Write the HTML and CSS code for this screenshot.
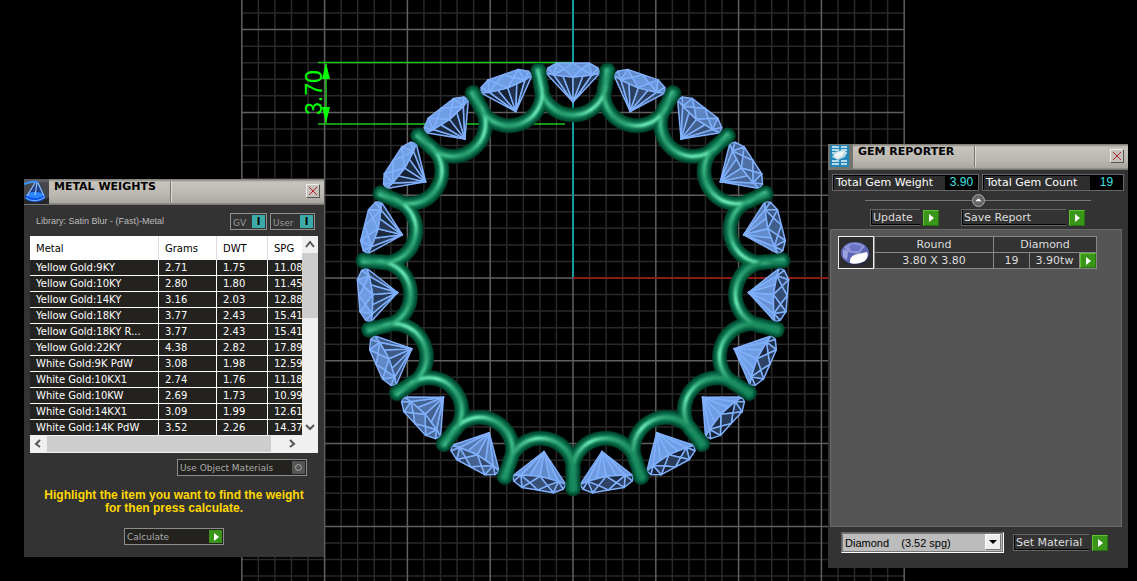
FILE: index.html
```html
<!DOCTYPE html>
<html lang="en">
<head>
  <meta charset="UTF-8">
  <title>Metal Weights / Gem Reporter</title>
  <link rel="stylesheet" href="styles.css">
</head>
<body>
  <main class="viewport">
    <svg class="scene" viewBox="0 0 1137 581" preserveAspectRatio="xMidYMid slice" role="img" aria-label="Eternity ring, front view">
      <defs>
        <path id="wire" d="M-34-208L-32-189C-29-174-16-163 0-163S29-174 32-189L34-208"/>
        <filter id="soft" x="-5%" y="-5%" width="110%" height="110%"><feGaussianBlur stdDeviation="1.1"/></filter>
        <linearGradient id="shine" gradientUnits="userSpaceOnUse" x1="-36" y1="0" x2="36" y2="0">
          <stop offset="0" stop-color="#1b8c60"/>
          <stop offset=".15" stop-color="#49c896"/>
          <stop offset=".35" stop-color="#2c9e71"/>
          <stop offset=".5" stop-color="#35b183"/>
          <stop offset=".75" stop-color="#7dfcca"/>
          <stop offset="1" stop-color="#5be0ad"/>
        </linearGradient>
        <linearGradient id="shine2" gradientUnits="userSpaceOnUse" x1="-36" y1="0" x2="36" y2="0">
          <stop offset="0" stop-color="#168559"/>
          <stop offset=".35" stop-color="#38b082"/>
          <stop offset=".65" stop-color="#7dfcca"/>
          <stop offset="1" stop-color="#168559"/>
        </linearGradient>
      </defs>
      <g id="grid"></g>
      <g class="dimension">
        <path d="M318 62.500H573M318 124H565"/>
        <path d="M326 64V123"/>
        <path class="arrow" d="M326 63L322 79H330ZM326 123L322 107H330Z"/>
        <text x="322" y="115" transform="rotate(-90 322 115)">3.70</text>
      </g>
      <path class="axis-y" d="M573 0V278"/>
      <path class="axis-x" d="M573 278H828"/>
      <g id="ring" transform="translate(573 278)"></g>
    </svg>

    <section class="window metal">
      <header class="titlebar">
        <svg class="logo" viewBox="0 0 25 25" aria-hidden="true">
          <rect width="25" height="25" fill="#45474d"/>
          <path d="M0 0H25V3L0 5Z" fill="#5b5d62"/>
          <path d="M0 20Q12 26 25 18V25H0Z" fill="#26272b"/>
          <path d="M11 4L2 18Q10 24 22 18L15 4Z" fill="#1f3f86"/>
          <ellipse cx="11" cy="18" rx="10" ry="5" fill="#0a55e8"/>
          <ellipse cx="11" cy="16" rx="8" ry="3" fill="#2f86ff"/>
          <path d="M0 5Q8 2 14 3" fill="none" stroke="#3c93ff" stroke-width="2"/>
          <path d="M11 4L3 17M13 4L11 16M14 4L20 17" fill="none" stroke="#9dc4f5" stroke-width="1.200"/>
          <path d="M2 19Q11 25 21 18" fill="none" stroke="#7db7ff"/>
        </svg>
        <h2>METAL WEIGHTS</h2>
        <i class="divider"></i>
        <button class="close" aria-label="Close"><svg viewBox="0 0 12 12"><path d="M2 2L10 10M10 2L2 10"/></svg></button>
      </header>
      <div class="library">
        <span class="library-name">Library: Satin Blur - (Fast)-Metal</span>
        <button class="toggle gv">GV <b>I</b></button>
        <button class="toggle user">User <b>I</b></button>
      </div>
      <div class="grid-box">
        <div class="rows">
          <table class="weights">
            <thead><tr><th>Metal</th><th>Grams</th><th>DWT</th><th>SPG</th></tr></thead>
            <tbody>
              <tr><td>Yellow Gold:9KY</td><td>2.71</td><td>1.75</td><td>11.08</td></tr>
              <tr><td>Yellow Gold:10KY</td><td>2.80</td><td>1.80</td><td>11.45</td></tr>
              <tr><td>Yellow Gold:14KY</td><td>3.16</td><td>2.03</td><td>12.88</td></tr>
              <tr><td>Yellow Gold:18KY</td><td>3.77</td><td>2.43</td><td>15.41</td></tr>
              <tr><td>Yellow Gold:18KY R...</td><td>3.77</td><td>2.43</td><td>15.41</td></tr>
              <tr><td>Yellow Gold:22KY</td><td>4.38</td><td>2.82</td><td>17.89</td></tr>
              <tr><td>White Gold:9K PdW</td><td>3.08</td><td>1.98</td><td>12.59</td></tr>
              <tr><td>White Gold:10KX1</td><td>2.74</td><td>1.76</td><td>11.18</td></tr>
              <tr><td>White Gold:10KW</td><td>2.69</td><td>1.73</td><td>10.99</td></tr>
              <tr><td>White Gold:14KX1</td><td>3.09</td><td>1.99</td><td>12.61</td></tr>
              <tr><td>White Gold:14K PdW</td><td>3.52</td><td>2.26</td><td>14.37</td></tr>
            </tbody>
          </table>
        </div>
        <div class="vbar">
          <svg viewBox="0 0 16 16"><path d="M4 11L8 6L12 11"/></svg>
          <i class="thumb"></i>
          <svg class="down" viewBox="0 0 16 16"><path d="M4 6L8 10L12 6"/></svg>
        </div>
        <div class="hbar">
          <svg viewBox="0 0 16 16"><path d="M10 5L6 9L10 12"/></svg>
          <i class="thumb"></i>
          <svg class="next" viewBox="0 0 16 16"><path d="M6 5L10 9L6 12"/></svg>
        </div>
      </div>
      <button class="flat materials">Use Object Materials <span class="ring-mark"><i></i></span></button>
      <p class="hint">Highlight the item you want to find the weight for then press calculate.</p>
      <button class="flat calculate">Calculate <span class="go"></span></button>
    </section>

    <section class="window gems">
      <header class="titlebar">
        <svg class="logo" viewBox="0 0 25 25" aria-hidden="true">
          <rect width="25" height="25" fill="#75756f"/>
          <rect x="2" y="1" width="19" height="22" fill="#2187b8"/>
          <path d="M4 3H11M13 3H19M4 6H11M13 6H19M4 9H19M4 17H11M13 17H19M4 20H11M13 20H19" stroke="#e7f5fa" stroke-width="1.500"/>
          <path d="M4 13L7 8 14 6 19 8 17 13 10 16Z" fill="#b9d8df"/>
          <path d="M6 11L10 8 17 7 14 12 9 15Z" fill="#eef4f3"/>
        </svg>
        <h2>GEM REPORTER</h2>
        <i class="divider"></i>
        <button class="close" aria-label="Close"><svg viewBox="0 0 12 12"><path d="M2 2L10 10M10 2L2 10"/></svg></button>
      </header>
      <div class="totals">
        <div class="total weight"><span>Total Gem Weight</span><output>3.90</output></div>
        <div class="total count"><span>Total Gem Count</span><output>19</output></div>
      </div>
      <div class="splitter"><button class="fold" aria-label="Collapse"><svg viewBox="0 0 14 14"><path d="M3 8L7 4L11 8Z"/></svg></button></div>
      <div class="actions">
        <button class="action update"><span>Update</span><i class="go"></i></button>
        <button class="action save"><span>Save Report</span><i class="go"></i></button>
      </div>
      <div class="report">
        <div class="gem">
          <svg class="gem-icon" viewBox="0 0 34 31" aria-hidden="true">
            <ellipse cx="17" cy="17" rx="14" ry="12" fill="#242940"/>
            <ellipse cx="16" cy="16" rx="14" ry="11" fill="#5d66b3"/>
            <path d="M5 10Q15 2 26 9L20 17 8 15Z" fill="#8f96d8"/>
            <path d="M4 12L9 15 8 23 4 20Z" fill="#9da4e2"/>
            <path d="M10 9L14 7 23 9 20 14 12 14Z" fill="#6973c4"/>
            <path d="M11 23Q12 18 19 17L28 15Q30 20 26 24 18 28 11 26Z" fill="#fff"/>
          </svg>
          <table class="gem-table">
            <colgroup><col class="size"><col class="qty"><col class="tw"><col class="run"></colgroup>
            <tr><td>Round</td><td colspan="3">Diamond</td></tr>
            <tr><td>3.80 X 3.80</td><td>19</td><td>3.90tw</td><td><button class="go" aria-label="Select gem"></button></td></tr>
          </table>
        </div>
      </div>
      <div class="footer">
        <div class="combo">
          <select aria-label="Gem material"><option>Diamond &nbsp;&nbsp; (3.52 spg)</option></select>
          <i class="drop"></i>
        </div>
        <button class="action set"><span>Set Material</span><i class="go"></i></button>
      </div>
    </section>
  </main>
  <script src="script.js"></script>
</body>
</html>
```
FILE: styles.css
```css
* { box-sizing: border-box; }
body { margin: 0; background: #000; color: #fff; font-family: "DejaVu Sans", sans-serif; font-size: 11px; }
h2, p { margin: 0; }
button { font: inherit; color: inherit; border: 0; padding: 0; background: none; cursor: pointer; }
.viewport { position: relative; height: 100vh; min-height: 570px; overflow: hidden; }
.scene { display: block; width: 100%; height: 100%; }

/* drawing */
.minor { stroke: #292929; stroke-width: 1.500; }
.major { stroke: #606060; stroke-width: 1.500; }
.axis-y { stroke: #159aa0; stroke-width: 2; }
.axis-x { stroke: #8c1d15; stroke-width: 2; }
.dimension { fill: none; stroke: #1fc81f; stroke-width: 1.500; }
.dimension .arrow { fill: #0f0; stroke: none; }
.dimension text { fill: #0f0; stroke: none; font: 23px "Liberation Sans", sans-serif; }
.facet { stroke: #80b0fc; stroke-width: 1.500; stroke-linejoin: round; }
.wire { fill: none; stroke-linecap: round; stroke-linejoin: round; }

/* windows */
.window { position: absolute; width: 300px; background: #333; }
.metal { left: 24px; top: 179px; height: 378px; }
.gems { right: 9px; top: 144px; height: 424px; }
.titlebar { display: flex; height: 26px; background: linear-gradient(#77756f, #c6c4bc 3px, #bab8b0 60%, #aaa8a0 90%, #6d6b66); }
.logo { width: 25px; height: 25px; }
.titlebar h2 { width: 121px; padding-left: 5px; color: #000; font-size: 11px; line-height: 15px; white-space: nowrap; }
.divider { width: 2px; height: 21px; margin-top: 2px; background: #77756f; border-right: 1px solid #dddbd5; }
.close { width: 14px; height: 14px; margin: 5px 4px 0 auto; background: #c4c2bb; border: 1px solid; border-color: #eee #555 #555 #eee; }
.close svg { display: block; }
.close path { stroke: #b5232f; fill: none; }

.library { display: flex; align-items: flex-end; gap: 3px; height: 25px; padding: 0 9px 0 12px; color: #bbb; }
.library-name { flex: 1; font: 9px/18px "Liberation Sans", sans-serif; white-space: nowrap; }
.toggle { display: flex; justify-content: space-between; height: 17px; padding: 1px; border: 1px solid #909090; color: #999; font-size: 9px; line-height: 16px; padding-left: 2px; }
.toggle b { width: 13px; height: 13px; background: #3caaa9; color: #000; font-size: 10px; line-height: 13px; }
.gv { width: 37px; }
.user { width: 45px; }

.grid-box { display: grid; grid-template: 199px 18px / 1fr 16px; margin: 6px 6px 0; background: #f0f0f0; }
.rows { overflow: hidden; background: #fff; }
.weights { width: 290px; table-layout: fixed; border-collapse: separate; border-spacing: 0; font-size: 10px; }
.weights th, .weights td { padding: 0 0 0 6px; text-align: left; white-space: nowrap; }
.weights th { height: 24px; background: #fff; color: #000; font-weight: normal; border-right: 1px solid #ddd; }
.weights td { height: 16px; line-height: 15px; background: #23221e; border-right: 1px solid #fff; border-bottom: 1px solid #fff; }
.weights th:nth-child(1) { width: 129px; }
.weights th:nth-child(2) { width: 58px; }
.weights th:nth-child(3) { width: 51px; }
.vbar { display: flex; flex-direction: column; }
.vbar .thumb { height: 65px; margin-top: 1px; background: #cdcdcd; }
.vbar .down { margin-top: auto; }
.hbar { display: flex; grid-column: 1 / 3; padding-right: 18px; }
.hbar .thumb { width: 224px; height: 16px; margin: 1px 0 0 1px; background: #cdcdcd; }
.hbar .next { margin-left: auto; }
.vbar svg, .hbar svg { flex: none; width: 16px; height: 16px; fill: none; stroke: #555; stroke-width: 2; }

.flat { display: flex; justify-content: space-between; height: 17px; padding: 1px 1px 1px 2px; border: 1px solid #8d8d8d; background: #23221e; color: #aaa; font-size: 9px; line-height: 15px; }
.materials { width: 130px; margin: 6px 17px 0 auto; }
.calculate { width: 100px; margin: 13px auto 0 100px; }
.ring-mark { display: flex; width: 13px; height: 13px; background: #555; }
.ring-mark i { width: 7px; height: 7px; margin: 3px; border: 1px solid #aaa; border-radius: 50%; }
.hint { width: 264px; margin: 13px auto 0; color: #ffd800; font: bold 12px/13px "Liberation Sans", sans-serif; text-align: center; }

.go { display: block; width: 16px; height: 16px; background: #3a9618; border: 1px solid; border-color: #5dc335 #277310 #277310 #5dc335; }
.go::before { content: ""; display: block; width: 0; height: 0; margin: 3px 0 0 5px; border-left: 5px solid #fff; border-top: 4px solid transparent; border-bottom: 4px solid transparent; }
.flat .go { width: 13px; height: 13px; border: 0; }

.totals { display: flex; gap: 3px; padding: 4px 4px 0; }
.total { display: flex; height: 17px; border: 1px solid #666; background: #2e2e2e; line-height: 15px; white-space: nowrap; }
.total span { flex: 1; padding-left: 2px; border-left: 1px solid #000; border-top: 1px solid #000; line-height: 14px; }
.total output { width: 33px; background: #000; color: #3fe0e0; font-family: "Liberation Sans", sans-serif; font-size: 12px; text-align: center; }
.weight { width: 147px; }
.count { flex: 1; }
.splitter { display: flex; justify-content: center; align-items: center; height: 18px; margin: 0 37px; background: linear-gradient(#777, #777) center / 100% 1px no-repeat; }
.fold { width: 13px; height: 13px; background: #666; border: 1px solid #aaa; border-radius: 50%; }
.fold svg { display: block; fill: #fff; }
.actions { display: flex; gap: 22px; padding: 0 42px; }
.action { display: flex; gap: 3px; align-items: center; color: #ddd; text-align: left; white-space: nowrap; }
.action span { height: 17px; padding-left: 2px; border: 1px solid #666; border-right: 0; box-shadow: inset 1px -1px #000; line-height: 16px; }
.update span { width: 50px; }
.save span { width: 105px; }
.set span { width: 76px; }
.report { height: 298px; margin: 3px 6px 0 2px; padding: 6px 7px; background: #555; border: 1px solid #696969; }
.gem { display: flex; height: 33px; }
.gem-icon { width: 36px; height: 33px; background: #2d2d2d; border: 1px solid #eee; }
.gem-table { width: 222px; table-layout: fixed; border-collapse: collapse; color: #ddd; background: #333; text-align: center; }
.gem-table td { height: 16px; padding: 0; border: 1px solid #888; line-height: 14px; }
.gem-table .go { width: 100%; height: 15px; }
.gem-table .go::before { margin: 0 0 0 5px; }
.size { width: 119px; }
.qty { width: 36px; }
.tw { width: 50px; }
.run { width: 17px; }
.footer { display: flex; align-items: center; gap: 9px; padding: 5px 13px 0; }
.combo { position: relative; width: 163px; height: 21px; border: 1px solid #fff; border-top-color: #666; border-left-color: #666; }
.combo select { display: block; width: 100%; height: 100%; padding: 0 2px; appearance: none; border: 1px solid #777; border-radius: 0; background: #bcbcbc; color: #000; font: 11px "Liberation Sans", sans-serif; }
.drop { position: absolute; top: 1px; right: 2px; width: 16px; height: 16px; background: #eee; border: 1px solid; border-color: #fff #777 #777 #fff; pointer-events: none; }
.drop::before { content: ""; display: block; width: 0; margin: 5px 3px; border: 4px solid transparent; border-top-color: #000; border-bottom: 0; }
```
FILE: script.js
```js
const NS = 'http://www.w3.org/2000/svg';
const STONES = 19;
const CX = 573, CY = 278, STEP = 16.56;

function add(parent, tag, attrs) {
  const el = document.createElementNS(NS, tag);
  for (const key in attrs) el.setAttribute(key, attrs[key]);
  parent.appendChild(el);
  return el;
}

// construction grid: every fifth line is a major one
const grid = document.getElementById('grid');
for (const type of ['minor', 'major']) {
  for (let i = -20; i <= 20; i++) {
    if ((i % 5 === 0) !== (type === 'major')) continue;
    const x = CX + i * STEP;
    const y = CY + i * STEP;
    add(grid, 'path', { class: type, d: `M${x} 0V581` });
    add(grid, 'path', { class: type, d: `M242 ${y}H904` });
  }
}

// facets of one stone, table up
const pavilion = [
  'M-27-205L-19-203L0-176Z', 'M-19-203L-10-202L0-176Z', 'M-10-202L0-201L0-176Z',
  'M0-201L10-202L0-176Z', 'M10-202L19-203L0-176Z', 'M19-203L27-205L0-176Z'
];
const crown = [
  'M-27-205L-25-210L-19-203Z', 'M-25-210L-16-215L-19-203Z', 'M-16-215L-9-209L-19-203Z',
  'M-19-203L-9-209L0-201Z', 'M-16-215L0-215L-9-209Z', 'M-9-209L0-215L9-209L0-201Z',
  'M16-215L0-215L9-209Z', 'M19-203L9-209L0-201Z', 'M16-215L9-209L19-203Z',
  'M25-210L16-215L19-203Z', 'M27-205L25-210L19-203Z'
];

function tint(t) {
  t = Math.max(0, Math.min(1, t));
  const mix = (a, b) => Math.round(a + (b - a) * t);
  return `rgb(${mix(22, 112)},${mix(34, 158)},${mix(54, 228)})`;
}

const ring = document.getElementById('ring');
for (let k = 0; k < STONES; k++) {
  const angle = k * 360 / STONES;
  const light = Math.cos((angle + 40) * Math.PI / 180);
  const g = add(ring, 'g', { transform: `rotate(${angle})` });
  pavilion.forEach((d, i) => add(g, 'path', { class: 'facet', d, fill: tint(.5 - light * .55 + (i % 2) * .12) }));
  crown.forEach((d, i) => add(g, 'path', { class: 'facet', d, fill: tint(.5 + light * .5 + (i % 3) * .1) }));
}

// metal: the same wire stroked from dark rim to highlight
const layers = [
  ['#003a24', 14], ['#004f34', 13], ['#08694a', 10], ['#158458', 6]
];
layers.forEach(([color, width], n) => {
  const g = add(ring, 'g', { class: 'wire', stroke: color, 'stroke-width': width });
  if (n) g.setAttribute('filter', 'url(#soft)');
  for (let k = 0; k < STONES; k++) {
    add(g, 'use', { href: '#wire', transform: `rotate(${k * 360 / STONES})` });
  }
});
const shine = add(ring, 'g', { class: 'wire', 'stroke-width': 3, filter: 'url(#soft)' });
for (let k = 0; k < STONES; k++) {
  const paint = k > 4 && k < 11 ? 'shine2' : 'shine';
  add(shine, 'use', { href: '#wire', stroke: `url(#${paint})`, transform: `rotate(${k * 360 / STONES})` });
}
```
